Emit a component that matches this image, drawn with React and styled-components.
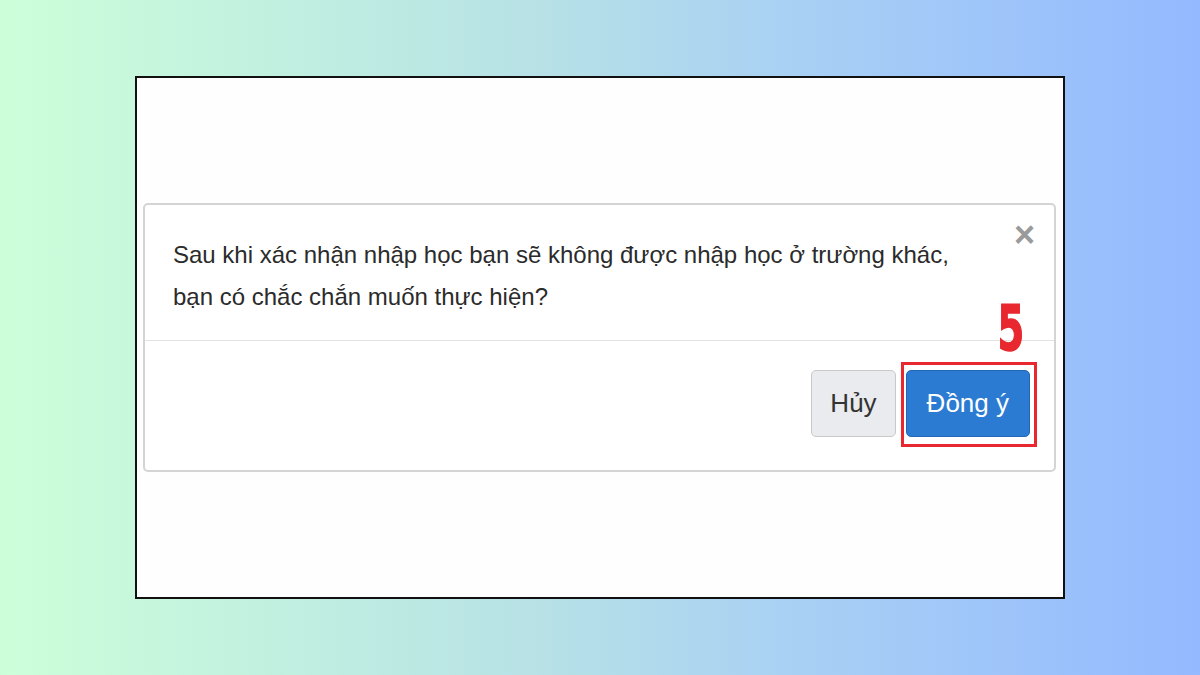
import React from 'react'
import styled, { createGlobalStyle } from 'styled-components'

const GlobalStyle = createGlobalStyle`
  html, body {
    margin: 0;
    padding: 0;
  }
  body {
    font-family: "Liberation Sans", Arial, sans-serif;
  }
`

const Page = styled.div`
  width: 1200px;
  height: 675px;
  display: flex;
  align-items: flex-start;
  padding: 76px 0 0 135px;
  box-sizing: border-box;
  background: linear-gradient(90deg, #ccffd9 0%, #b7e1e6 45%, #a9d1f3 65%, #94b9ff 100%);
`

const Frame = styled.div`
  width: 930px;
  height: 523px;
  box-sizing: border-box;
  border: 2px solid #111;
  background: #fefefe;
  display: flex;
  align-items: center;
  padding: 0 7px 0 6px;
`

const Modal = styled.div`
  flex: 1;
  height: 269px;
  box-sizing: border-box;
  border: 2px solid #d4d4d4;
  border-radius: 5px;
  background: #fff;
  display: flex;
  flex-direction: column;
`

const Body = styled.div`
  position: relative;
  padding: 29px 60px 22px 28px;
  border-bottom: 1px solid #e2e2e2;
`

const Message = styled.p`
  margin: 0;
  font-size: 24px;
  line-height: 42px;
  color: #2b2b2b;
`

const Close = styled.button`
  position: absolute;
  top: 12px;
  right: 19px;
  border: none;
  background: none;
  padding: 0;
  font-size: 36px;
  font-weight: 700;
  line-height: 36px;
  color: #9a9a9a;
  font-family: "Liberation Sans", Arial, sans-serif;
`

const Footer = styled.div`
  flex: 1;
  display: flex;
  align-items: center;
  justify-content: flex-end;
  gap: 10px;
  padding: 0 24px 4px 0;
`

const Button = styled.button`
  height: 67px;
  padding: 0 ${p => (p.$primary ? '20px' : '18px')};
  border-radius: 5px;
  font-family: "Liberation Sans", Arial, sans-serif;
  font-size: 26px;
  border: 1px solid ${p => (p.$primary ? '#2368b8' : '#c9c9c9')};
  background: ${p => (p.$primary ? '#2b7bd2' : '#e9ebee')};
  color: ${p => (p.$primary ? '#fff' : '#333')};
`

const Marked = styled.div`
  position: relative;
  display: flex;
`

const Highlight = styled.div`
  position: absolute;
  inset: -8px -7px -10px -5px;
  border: 3px solid #e8272e;
  pointer-events: none;
`

const StepNumber = styled.span`
  position: absolute;
  right: 6px;
  top: -72px;
  font-family: "DejaVu Sans", sans-serif;
  font-weight: 700;
  font-size: 62px;
  line-height: 62px;
  color: #e8272e;
  -webkit-text-stroke: 1.5px #e8272e;
  transform: scaleX(0.62);
  transform-origin: right center;
`

export default function App() {
  return (
    <>
      <GlobalStyle />
      <Page>
        <Frame>
          <Modal>
            <Body>
              <Message>
                Sau khi xác nhận nhập học bạn sẽ không được nhập học ở trường khác,
                <br />
                bạn có chắc chắn muốn thực hiện?
              </Message>
              <Close aria-label="Đóng">×</Close>
            </Body>
            <Footer>
              <Button>Hủy</Button>
              <Marked>
                <Button $primary>Đồng ý</Button>
                <Highlight />
                <StepNumber>5</StepNumber>
              </Marked>
            </Footer>
          </Modal>
        </Frame>
      </Page>
    </>
  )
}
